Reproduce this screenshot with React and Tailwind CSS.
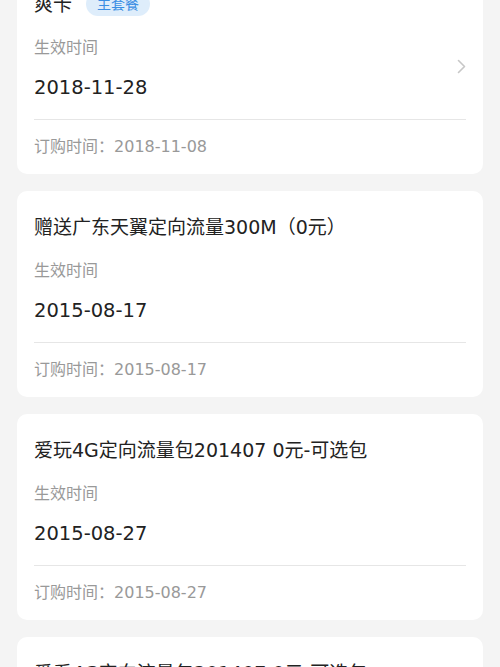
import React from 'react';

const packages = [
  { id: 1, name: '爽卡', main: true, start: '2018-11-28', ordered: '2018-11-08' },
  { id: 2, name: '赠送广东天翼定向流量300M（0元）', start: '2015-08-17', ordered: '2015-08-17' },
  { id: 3, name: '爱玩4G定向流量包201407 0元-可选包', start: '2015-08-27', ordered: '2015-08-27' },
  { id: 4, name: '爱看4G定向流量包201407 0元-可选包', start: '2015-08-27', ordered: '2015-08-27' },
];

const Chevron = () => (
  <svg width="9" height="15" viewBox="0 0 9 15" fill="none">
    <polyline points="1.5,1.5 7.5,7.5 1.5,13.5" stroke="#c7c7c7" strokeWidth="1.6" strokeLinecap="round" strokeLinejoin="round" />
  </svg>
);

const PackageCard = ({ pkg }) => (
  <div className="bg-white rounded-[10px] px-[17px] pt-[23px] pb-[16px]">
    <div className="flex items-center gap-[14px]">
      <span className="text-[19px] leading-[26px] text-[#222]">{pkg.name}</span>
      {pkg.main && (
        <span className="px-[11px] h-[24px] flex items-center rounded-full bg-[#deedfb] text-[#3a8ee3] text-[14px]">主套餐</span>
      )}
    </div>
    <div className="flex items-center justify-between">
      <div>
        <div className="mt-[20px] text-[16px] leading-[22px] text-[#999]">生效时间</div>
        <div className="mt-[16px] text-[19.5px] leading-[26px] text-[#222]">{pkg.start}</div>
      </div>
      {pkg.main && (
        <div className="pt-[14px]">
          <Chevron />
        </div>
      )}
    </div>
    <div className="mt-[18px] h-px bg-[#e6e6e6]" />
    <div className="mt-[16px] text-[16px] leading-[22px] text-[#999]">订购时间：{pkg.ordered}</div>
  </div>
);

const App = () => {
  return (
    <div className="h-[667px] overflow-hidden bg-[#f4f4f4] font-['DejaVu_Sans','Noto_Sans_CJK_SC',sans-serif]">
      <div className="-mt-[32px] px-[17px] flex flex-col gap-[17px]">
        {packages.map(pkg => (
          <PackageCard key={pkg.id} pkg={pkg} />
        ))}
      </div>
    </div>
  );
};

export default App;
